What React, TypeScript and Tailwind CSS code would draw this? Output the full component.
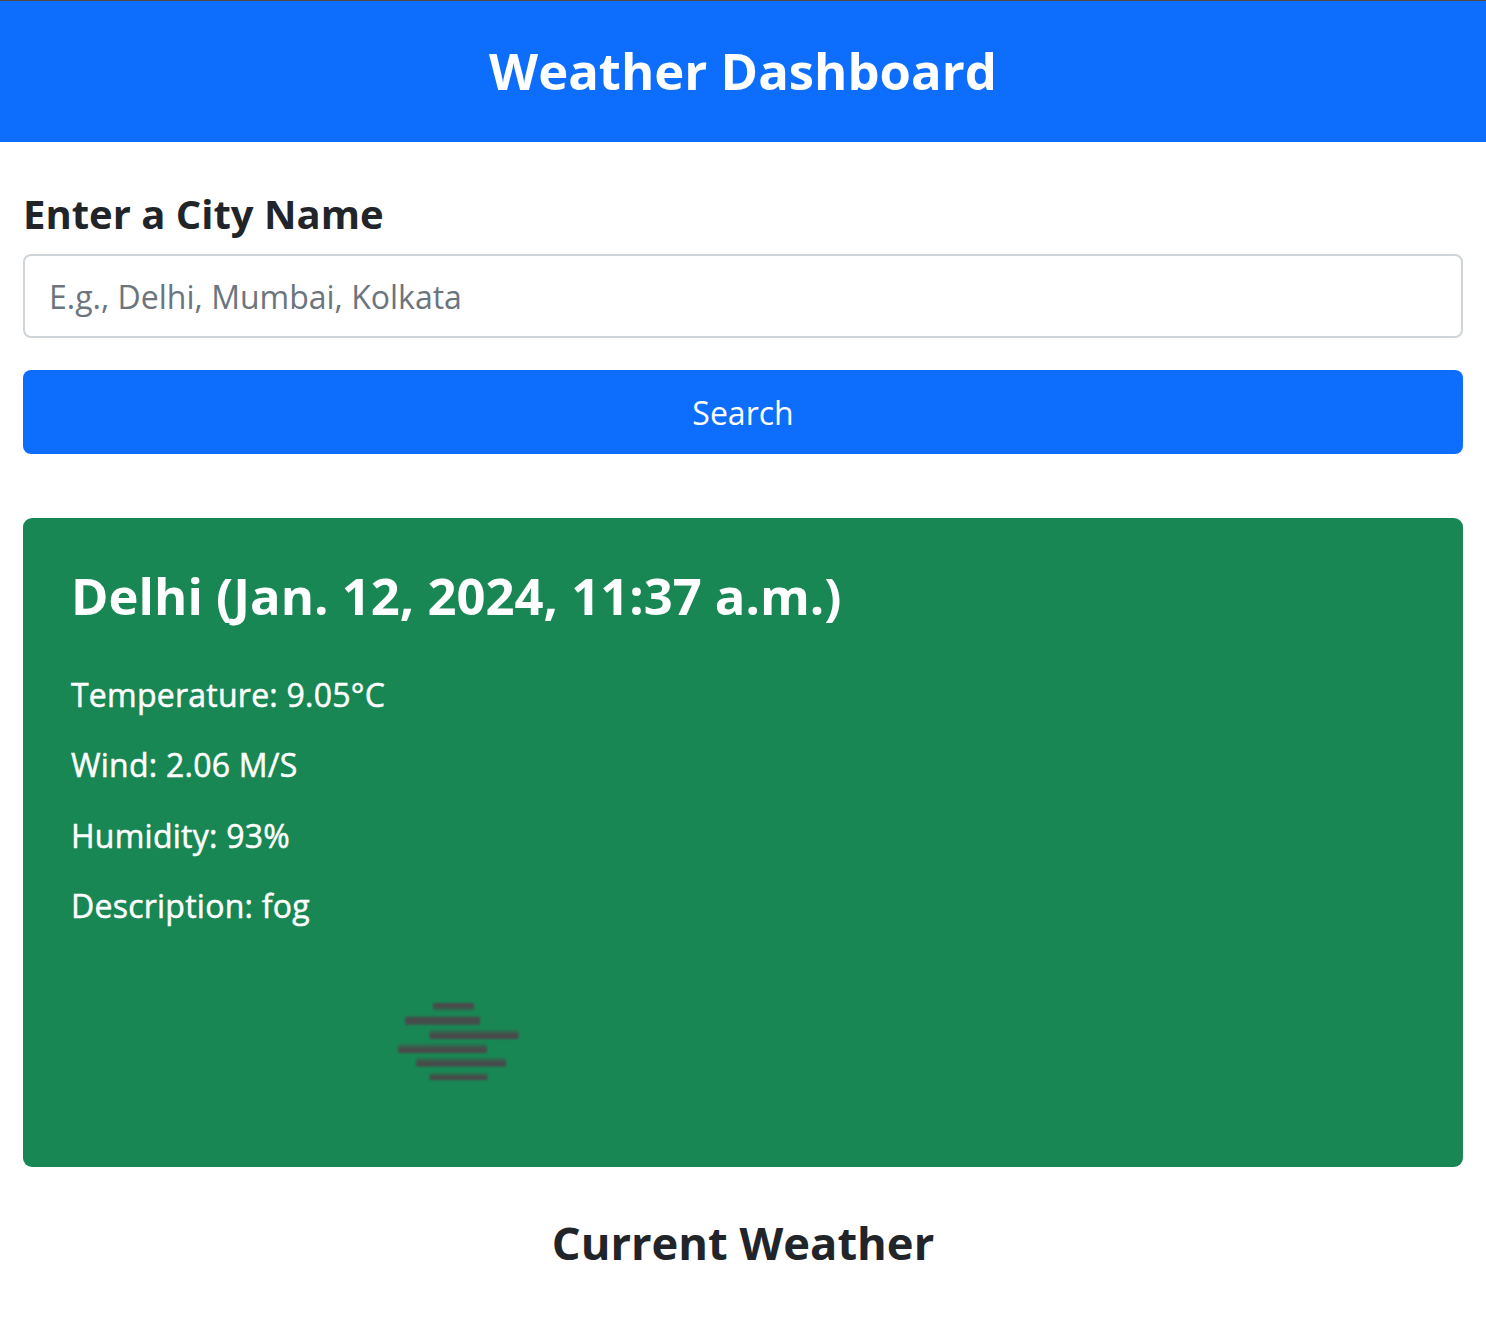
const readings = ["Temperature: 9.05°C", "Wind: 2.06 M/S", "Humidity: 93%", "Description: fog"];

const bars = [
  { x: 433, y: 1003, w: 41, h: 8, fill: "url(#fadeDown)" },
  { x: 405, y: 1016.5, w: 75, h: 8.5, fill: "url(#fadeBoth)" },
  { x: 429.5, y: 1030, w: 89, h: 9, fill: "url(#fadeUp)" },
  { x: 398, y: 1044, w: 89, h: 9, fill: "url(#fadeUp)" },
  { x: 416, y: 1058, w: 90, h: 8.5, fill: "url(#fadeUp)" },
  { x: 429.5, y: 1073, w: 58, h: 7, fill: "url(#fadeUp)" },
];

function FogIcon() {
  return (
    <svg className="mt-[76.4px] ml-[326px] h-[78px] w-[122px] overflow-visible blur-[0.9px]" viewBox="397 1002 122 78">
      <defs>
        <linearGradient id="fadeDown" x1="0" y1="0" x2="0" y2="1">
          <stop offset="0.45" stopColor="#4b484a" />
          <stop offset="1" stopColor="#4b484a" stopOpacity="0.2" />
        </linearGradient>
        <linearGradient id="fadeBoth" x1="0" y1="0" x2="0" y2="1">
          <stop offset="0" stopColor="#4b484a" stopOpacity="0.75" />
          <stop offset="0.4" stopColor="#4b484a" />
          <stop offset="1" stopColor="#4b484a" stopOpacity="0.75" />
        </linearGradient>
        <linearGradient id="fadeUp" x1="0" y1="0" x2="0" y2="1">
          <stop offset="0" stopColor="#4b484a" stopOpacity="0.3" />
          <stop offset="0.6" stopColor="#4b484a" />
        </linearGradient>
      </defs>
      {bars.map((b) => (
        <rect key={b.y} x={b.x} y={b.y} width={b.w} height={b.h} rx="1.5" fill={b.fill} />
      ))}
    </svg>
  );
}

export default function App() {
  return (
    <div className="min-h-[1318px] bg-white font-['Open_Sans',sans-serif] text-[#212529]">
      <header className="flex h-[142px] items-center justify-center border-t border-[#55484a] bg-[#0d6efd] pb-[2px]">
        <h1 className="text-[50.8px] leading-[62px] font-bold text-white">Weather Dashboard</h1>
      </header>
      <main className="px-[23px] pt-[48px]">
        <h3 className="mb-4 text-[40px] leading-[48px] font-bold">Enter a City Name</h3>
        <input
          className="block h-[84px] w-full rounded-[8px] border-2 border-[#ced4da] px-[24px] text-[32px] placeholder:text-[#6c757d] placeholder:opacity-100"
          placeholder="E.g., Delhi, Mumbai, Kolkata"
        />
        <button className="mt-8 block h-[84px] w-full rounded-[8px] bg-[#0d6efd] pt-px text-[32px] text-white">Search</button>
        <section className="mt-16 h-[649px] rounded-[9px] bg-[#198754] px-[48px] pt-[47px] text-white">
          <h2 className="mb-[49px] text-[50.75px] leading-[62px] font-bold">Delhi (Jan. 12, 2024, 11:37 a.m.)</h2>
          <div className="flex flex-col gap-[32px] tracking-[0.24px] [-webkit-text-stroke:0.5px_white]">
            {readings.map((r) => (
              <p key={r} className="text-[32px] leading-[38.4px]">{r}</p>
            ))}
          </div>
          <FogIcon />
        </section>
        <h2 className="mt-[49px] text-center text-[45.3px] leading-[54px] font-bold">Current Weather</h2>
      </main>
    </div>
  );
}
